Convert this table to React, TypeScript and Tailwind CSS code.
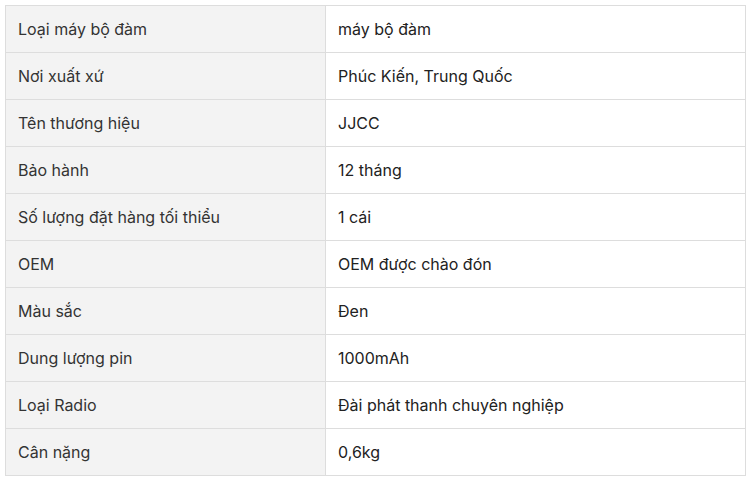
const rows: [string, string][] = [
  ['Loại máy bộ đàm', 'máy bộ đàm'],
  ['Nơi xuất xứ', 'Phúc Kiến, Trung Quốc'],
  ['Tên thương hiệu', 'JJCC'],
  ['Bảo hành', '12 tháng'],
  ['Số lượng đặt hàng tối thiểu', '1 cái'],
  ['OEM', 'OEM được chào đón'],
  ['Màu sắc', 'Đen'],
  ['Dung lượng pin', '1000mAh'],
  ['Loại Radio', 'Đài phát thanh chuyên nghiệp'],
  ['Cân nặng', '0,6kg'],
];

export default function App() {
  return (
    <div className="bg-white pt-[5px] pl-[5px] font-['Inter',sans-serif] text-[16px]">
      <table className="w-[741px] border-collapse table-fixed">
        <colgroup>
          <col className="w-[320px]" />
          <col />
        </colgroup>
        <tbody>
          {rows.map(([k, v]) => (
            <tr key={k} className="h-[47px]">
              <td className="border border-[#dddddd] bg-[#f3f3f3] px-3 text-[#333333] align-middle">
                {k}
              </td>
              <td className="border border-[#dddddd] bg-white px-3 text-[#222222] align-middle">
                {v}
              </td>
            </tr>
          ))}
        </tbody>
      </table>
    </div>
  );
}
